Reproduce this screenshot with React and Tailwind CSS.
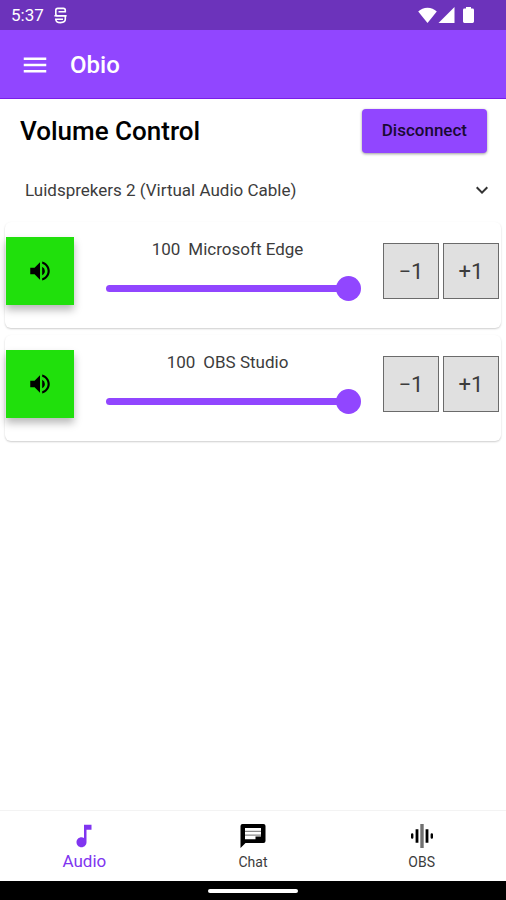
import { useState } from "react";
import { MdExpandMore, MdMenu, MdMusicNote, MdVolumeUp } from "react-icons/md";

const devices = ["Luidsprekers 2 (Virtual Audio Cable)"];

const initialSources = [
  { id: "edge", name: "Microsoft Edge", volume: 100, muted: false },
  { id: "obs", name: "OBS Studio", volume: 100, muted: false },
];

const WaveIcon = ({ className }) => (
  <svg viewBox="0 0 24 24" className={className} fill="none" stroke="currentColor" aria-hidden="true">
    <path d="M2.2 10.5v3M21.8 10.5v3" strokeWidth="2.4" strokeLinecap="round" />
    <path d="M7 5.2v13.6M17 5.2v13.6" strokeWidth="2.8" />
    <path d="M12 0v24" strokeWidth="3.4" stroke="#707070" />
  </svg>
);

const ChatIcon = ({ className }) => (
  <svg viewBox="0 0 26 26" className={className} aria-hidden="true">
    <path d="M2.5 1H23.5Q25.5 1 25.5 3V18Q25.5 20 23.5 20H5.5L0.5 25V3Q0.5 1 2.5 1Z" fill="currentColor" />
    <path d="M5 5H21V13.6H15.5V16.2H5Z" fill="#ffffff" />
    <path d="M5 8.3H21M5 12.2H21" stroke="#8a8a8a" strokeWidth="1.2" />
  </svg>
);

const StatusBar = () => (
  <div className="flex h-[30px] items-center justify-between bg-[#6c33bb] pr-8 pl-[11px] text-white">
    <div className="flex items-center gap-2.5">
      <span className="text-[17px] leading-5">5:37</span>
      <svg viewBox="0 0 13 17" className="h-[17px] w-[13px]" fill="none" stroke="currentColor" strokeWidth="1.6" aria-hidden="true">
        <path d="M1.8 5V3.4Q1.8 1.4 3.8 1.4H9.4Q11.3 1.4 11.3 3.4V4.8H4.5" />
        <path d="M1.8 4.8V7Q1.8 8.8 3.6 8.8H11.3V12Q11.3 15.6 6.6 15.6T1.8 12.2H9" />
        <path d="M0.4 8.8H12.6" />
      </svg>
    </div>
    <div className="flex items-center">
      <svg viewBox="0 0 19 16" className="h-4 w-[19px]" fill="currentColor" aria-hidden="true">
        <path d="M9.5 16 0.2 4.6Q4 0.8 9.5 0.8T18.8 4.6Z" />
      </svg>
      <svg viewBox="0 0 17 16" className="ml-px h-4 w-[17px]" fill="currentColor" aria-hidden="true">
        <path d="M16.5 0V16H0.5Z" />
      </svg>
      <svg viewBox="0 0 11 16" className="ml-2 h-4 w-[11px]" fill="currentColor" aria-hidden="true">
        <path d="M3 0H8V1.6H9.6Q11 1.6 11 3V14.6Q11 16 9.6 16H1.4Q0 16 0 14.6V3Q0 1.6 1.4 1.6H3Z" />
      </svg>
    </div>
  </div>
);

const SourceCard = ({ source, onVolume, onMute }) => {
  const { id, name, volume, muted } = source;

  return (
    <li className="flex h-[106px] items-start rounded-md pt-[15px] pr-0.5 pl-px shadow-[0_1px_2px_rgba(0,0,0,0.2)]">
      <button
        type="button"
        aria-label={`Mute ${name}`}
        aria-pressed={muted}
        onClick={() => onMute(id)}
        className="flex size-[68px] shrink-0 items-center justify-center bg-[#20e00c] text-black shadow-[0_5px_8px_rgba(0,0,0,0.28)]"
      >
        <MdVolumeUp className="size-[26px]" />
      </button>

      <div className="mr-[22px] ml-8 flex min-w-0 flex-1 flex-col items-center pt-0.5">
        <label htmlFor={`volume-${id}`} className="flex gap-2 pr-3 text-[17px] leading-5 text-[#3c3c3c]">
          <span>{volume}</span>
          <span>{name}</span>
        </label>
        <input
          id={`volume-${id}`}
          type="range"
          min="0"
          max="100"
          value={volume}
          onChange={(e) => onVolume(id, Number(e.target.value))}
          className="mt-4 h-[26px] w-full appearance-none bg-transparent [&::-webkit-slider-runnable-track]:h-[7px] [&::-webkit-slider-runnable-track]:rounded-full [&::-webkit-slider-runnable-track]:bg-[linear-gradient(to_right,#9146ff_96%,transparent_96%)] [&::-webkit-slider-thumb]:-mt-[9px] [&::-webkit-slider-thumb]:size-[25px] [&::-webkit-slider-thumb]:appearance-none [&::-webkit-slider-thumb]:rounded-full [&::-webkit-slider-thumb]:bg-[#9146ff]"
        />
      </div>

      <div className="flex gap-1 pt-1.5">
        <button
          type="button"
          onClick={() => onVolume(id, volume - 1)}
          className="size-14 border border-[#6b6b6b] bg-[#e0e0e0] text-[22px] text-[#3c3c3c]"
        >
          −1
        </button>
        <button
          type="button"
          onClick={() => onVolume(id, volume + 1)}
          className="size-14 border border-[#6b6b6b] bg-[#e0e0e0] text-[22px] text-[#3c3c3c]"
        >
          +1
        </button>
      </div>
    </li>
  );
};

const BottomNav = () => (
  <nav className="grid h-[71px] grid-cols-3 border-t border-[#f3f3f3] bg-white">
    <a href="#audio" aria-current="page" className="flex flex-col items-center pt-2.5 text-[#8035f0]">
      <MdMusicNote className="size-[30px]" />
      <span className="text-[17px] leading-5">Audio</span>
    </a>
    <a href="#chat" className="flex flex-col items-center pt-2.5 text-black">
      <span className="flex h-[30px] items-center">
        <ChatIcon className="size-[26px]" />
      </span>
      <span className="text-sm leading-[22px] text-[#3c3c3c]">Chat</span>
    </a>
    <a href="#obs" className="flex flex-col items-center pt-2.5 text-black">
      <span className="flex h-[30px] items-center">
        <WaveIcon className="size-6" />
      </span>
      <span className="text-sm leading-[22px] text-[#3c3c3c]">OBS</span>
    </a>
  </nav>
);

const App = () => {
  const [sources, setSources] = useState(initialSources);

  const setVolume = (id, value) => {
    const volume = Math.min(100, Math.max(0, value));
    setSources((prev) => prev.map((s) => (s.id === id ? { ...s, volume } : s)));
  };

  const toggleMute = (id) => {
    setSources((prev) => prev.map((s) => (s.id === id ? { ...s, muted: !s.muted } : s)));
  };

  return (
    <div className="flex min-h-screen flex-col bg-white font-[Roboto,sans-serif] text-black">
      <StatusBar />

      <header className="flex h-[69px] items-center gap-5 border-b border-[#7a1fe8] bg-[#9146ff] px-5 pt-0.5 text-white">
        <button type="button" aria-label="Menu">
          <MdMenu className="size-[30px]" />
        </button>
        <h1 className="text-2xl font-medium">Obio</h1>
      </header>

      <main className="flex-1">
        <div className="flex items-center justify-between pt-2.5 pr-[19px] pl-5">
          <h2 className="text-[26px] leading-9 font-medium">Volume Control</h2>
          <button
            type="button"
            className="h-11 rounded bg-[#9146ff] px-5 text-[17px] font-medium text-[#1a0a33] shadow-[0_1px_3px_rgba(0,0,0,0.4)]"
          >
            Disconnect
          </button>
        </div>

        <div className="relative mt-[15px]">
          <select
            aria-label="Output device"
            className="h-[46px] w-full appearance-none bg-transparent pr-12 pl-[25px] text-[17px] text-[#3c3c3c]"
          >
            {devices.map((device) => (
              <option key={device}>{device}</option>
            ))}
          </select>
          <MdExpandMore className="pointer-events-none absolute top-2.5 right-3 size-6 text-[#333333]" />
        </div>

        <ul className="mt-2 flex flex-col gap-[7px] px-[5px]">
          {sources.map((source) => (
            <SourceCard key={source.id} source={source} onVolume={setVolume} onMute={toggleMute} />
          ))}
        </ul>
      </main>

      <BottomNav />

      <div className="flex h-[19px] items-center justify-center bg-black">
        <div className="h-1 w-[90px] rounded-sm bg-white" />
      </div>
    </div>
  );
};

export default App;
